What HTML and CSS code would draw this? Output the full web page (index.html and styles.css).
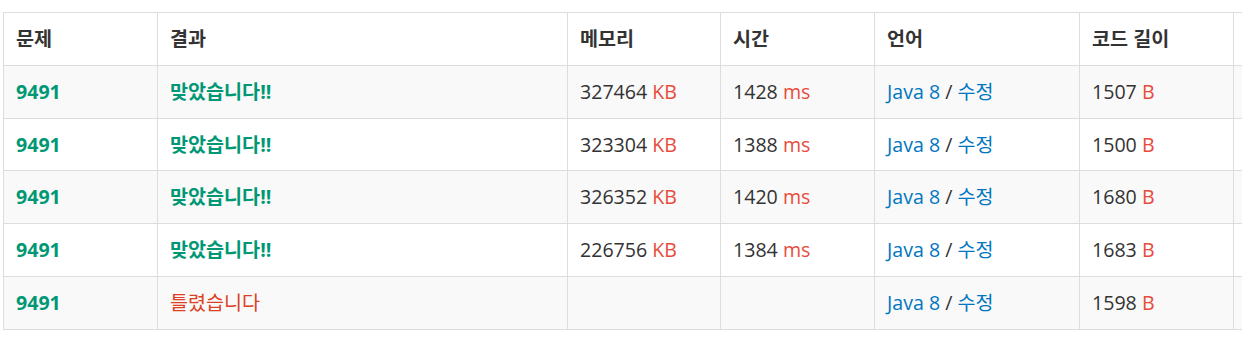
FILE: index.html
```html
<!DOCTYPE html>
<html lang="ko">
<head>
<meta charset="utf-8">
<link rel="stylesheet" href="styles.css">
</head>
<body>
<div class="wrap">
<table class="status">
  <colgroup>
    <col class="c-prob"><col class="c-res"><col class="c-mem"><col class="c-time"><col class="c-lang"><col class="c-len"><col class="c-date">
  </colgroup>
  <thead>
    <tr><th>문제</th><th>결과</th><th>메모리</th><th>시간</th><th>언어</th><th>코드 길이</th><th></th></tr>
  </thead>
  <tbody>
    <tr><td><a class="prob">9491</a></td><td><span class="ac">맞았습니다!!</span></td><td>327464 <span class="unit">KB</span></td><td>1428 <span class="unit">ms</span></td><td><a class="link">Java 8</a> / <a class="link">수정</a></td><td>1507 <span class="unit">B</span></td><td></td></tr>
    <tr><td><a class="prob">9491</a></td><td><span class="ac">맞았습니다!!</span></td><td>323304 <span class="unit">KB</span></td><td>1388 <span class="unit">ms</span></td><td><a class="link">Java 8</a> / <a class="link">수정</a></td><td>1500 <span class="unit">B</span></td><td></td></tr>
    <tr><td><a class="prob">9491</a></td><td><span class="ac">맞았습니다!!</span></td><td>326352 <span class="unit">KB</span></td><td>1420 <span class="unit">ms</span></td><td><a class="link">Java 8</a> / <a class="link">수정</a></td><td>1680 <span class="unit">B</span></td><td></td></tr>
    <tr><td><a class="prob">9491</a></td><td><span class="ac">맞았습니다!!</span></td><td>226756 <span class="unit">KB</span></td><td>1384 <span class="unit">ms</span></td><td><a class="link">Java 8</a> / <a class="link">수정</a></td><td>1683 <span class="unit">B</span></td><td></td></tr>
    <tr><td><a class="prob">9491</a></td><td><span class="wa">틀렸습니다</span></td><td></td><td></td><td><a class="link">Java 8</a> / <a class="link">수정</a></td><td>1598 <span class="unit">B</span></td><td></td></tr>
  </tbody>
</table>
</div>
</body>
</html>
```
FILE: styles.css
```css
html, body {
  margin: 0;
  padding: 0;
  background: #fff;
  overflow: hidden;
}
body {
  font-family: "Open Sans", "Noto Sans CJK KR", sans-serif;
  font-size: 19.6px;
  color: #333;
}
.wrap {
  padding: 12px 0 0 3px;
  overflow: hidden;
  width: 1239px;
}
.status {
  border-collapse: collapse;
  table-layout: fixed;
  width: 1384px;
}
.c-prob { width: 154px; }
.c-res { width: 410px; }
.c-mem { width: 153px; }
.c-time { width: 154px; }
.c-lang { width: 205px; }
.c-len { width: 154px; }
.c-date { width: 154px; }
.status th, .status td {
  border: 1px solid #ddd;
  padding: 13px 12px;
  line-height: 25.8px;
  height: 25.8px;
  text-align: left;
  white-space: nowrap;
  overflow: hidden;
}
.status th {
  font-weight: 700;
  color: #333;
}
.status tbody tr:nth-child(odd) {
  background: #f9f9f9;
}
.prob {
  color: #009874;
  font-weight: 700;
}
.ac {
  color: #009874;
  font-weight: 700;
}
.wa {
  color: #dd4124;
}
.unit {
  color: #e74c3c;
}
.link {
  color: #0076c0;
}
```
